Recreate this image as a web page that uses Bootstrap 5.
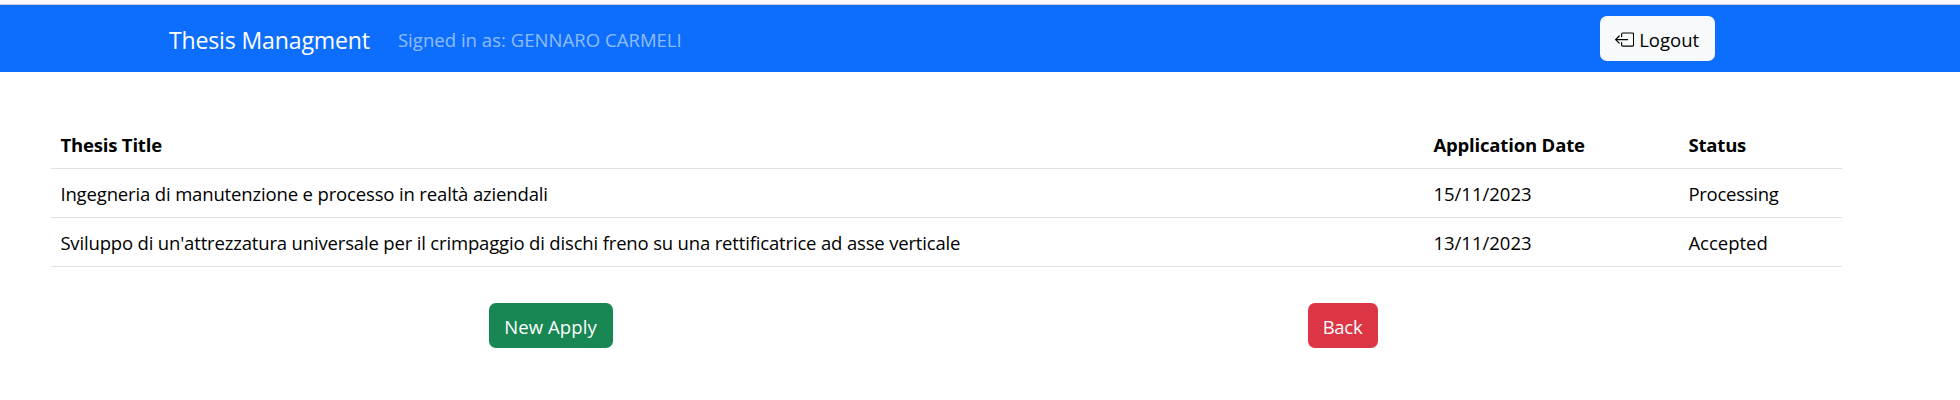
<!DOCTYPE html>
<html lang="it">
<head>
<meta charset="utf-8">
<title>Thesis Managment</title>
<link rel="stylesheet" href="https://cdn.jsdelivr.net/npm/bootstrap@5.3.0/dist/css/bootstrap.min.css">
<style>
  html { font-size: 19.2px; }
  body { font-family: "Open Sans", "Noto Sans", sans-serif; font-size: 18.5px; line-height: 29px; color: #000; background: #fff; overflow: hidden; }
  .top-strip { height: 5px; background: #f8f8fb; border-bottom: 1px solid #c8c8cc; }
  .page-area { width: 1893px; }
  .app-bar { height: 67px; padding: 0; }
  .app-bar .container, .actions { max-width: 1584px; }
  .app-bar .navbar-brand { font-size: 23.1px; letter-spacing: -.16px; color: #fff; margin-right: 28px; padding-top: 9px; padding-bottom: 5px; }
  .app-bar .navbar-text { color: rgba(255, 255, 255, .55); letter-spacing: .04px; padding-top: 11px; padding-bottom: 9px; }
  .btn { font-size: 18.5px; line-height: 29px; height: 45px; padding: 9px 15px 7px; border: 0; border-radius: 7px; }
  .btn-logout { width: 115px; }
  .btn-logout svg { width: 19.2px; height: 19.2px; margin: 0 5.5px 0 0; flex: none; }
  .btn-apply { width: 124px; letter-spacing: .1px; }
  .btn-back { width: 70px; letter-spacing: -.3px; }
  .thesis-list { width: 1791px; margin: 47px 0 36px 51px; table-layout: fixed; --bs-table-color: #000; border-color: #dee2e6; }
  .thesis-list > :not(caption) > * > * { height: 49px; padding: 10px 10px 9px 9.4px; }
  .thesis-list th { letter-spacing: -.17px; }
  .col-title { width: 1373px; }
  .col-date { width: 255px; }
  .ls-a { letter-spacing: -.15px; }
  .ls-b { letter-spacing: -.165px; }
  .ls-c { letter-spacing: -.25px; }
</style>
</head>
<body>
<div class="top-strip"></div>
<nav class="navbar navbar-expand app-bar bg-primary">
  <div class="page-area">
    <div class="container d-flex align-items-center">
      <a class="navbar-brand">Thesis Managment</a>
      <span class="navbar-text me-auto">Signed in as: GENNARO CARMELI</span>
      <button class="btn btn-light btn-logout d-flex align-items-center text-black me-2" type="button">
        <svg viewBox="0 0 16 16" fill="currentColor" aria-hidden="true">
          <path fill-rule="evenodd" d="M6 12.5a.5.5 0 0 0 .5.5h8a.5.5 0 0 0 .5-.5v-9a.5.5 0 0 0-.5-.5h-8a.5.5 0 0 0-.5.5v2a.5.5 0 0 1-1 0v-2A1.5 1.5 0 0 1 6.5 2h8A1.5 1.5 0 0 1 16 3.5v9a1.5 1.5 0 0 1-1.5 1.5h-8A1.5 1.5 0 0 1 5 12.5v-2a.5.5 0 0 1 1 0v2z"/>
          <path fill-rule="evenodd" d="M.146 8.354a.5.5 0 0 1 0-.708l3-3a.5.5 0 1 1 .708.708L1.707 7.5H10.5a.5.5 0 0 1 0 1H1.707l2.147 2.146a.5.5 0 0 1-.708.708l-3-3z"/>
        </svg>
        <span>Logout</span>
      </button>
    </div>
  </div>
</nav>
<main class="page-area">
  <table class="table thesis-list">
    <colgroup><col class="col-title"><col class="col-date"><col></colgroup>
    <thead>
      <tr><th>Thesis Title</th><th>Application Date</th><th>Status</th></tr>
    </thead>
    <tbody>
      <tr><td class="ls-a">Ingegneria di manutenzione e processo in realtà aziendali</td><td>15/11/2023</td><td class="ls-c">Processing</td></tr>
      <tr><td class="ls-b">Sviluppo di un'attrezzatura universale per il crimpaggio di dischi freno su una rettificatrice ad asse verticale</td><td>13/11/2023</td><td>Accepted</td></tr>
    </tbody>
  </table>
  <div class="container actions">
    <div class="row text-center">
      <div class="col"><button class="btn btn-success btn-apply" type="button">New Apply</button></div>
      <div class="col"><button class="btn btn-danger btn-back" type="button">Back</button></div>
    </div>
  </div>
</main>
<script src="https://cdn.jsdelivr.net/npm/bootstrap@5.3.0/dist/js/bootstrap.bundle.min.js"></script>
</body>
</html>
